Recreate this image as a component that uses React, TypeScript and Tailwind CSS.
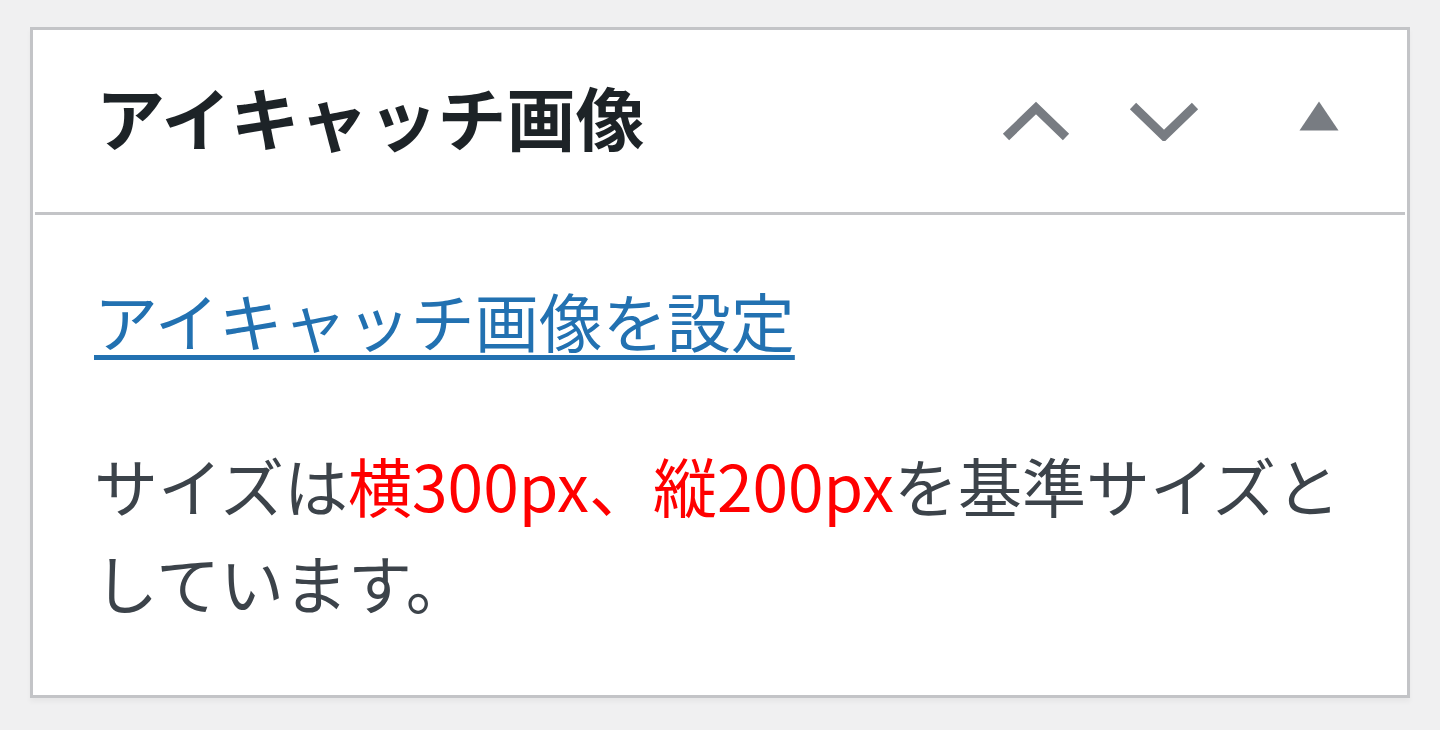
import React from "react";

export default function App() {
  return (
    <div className="w-[1440px] h-[730px] bg-[#f0f0f1] pt-[27px] pl-[30px] overflow-hidden" style={{ fontFamily: '"Noto Sans CJK JP", "Noto Sans", sans-serif' }}>
      <div className="w-[1380px] h-[671px] bg-white border-[3px] border-[#c3c4c7] shadow-[0_4px_5px_rgba(0,0,0,0.04)] flex flex-col">
        <div className="h-[185px] mx-[2px] border-b-[3px] border-[#c3c4c7] flex items-center justify-between pl-[61px] pr-[66px]">
          <h2 className="text-[69px] font-bold text-[#1d2327] leading-none mb-[9px]">アイキャッチ画像</h2>
          <div className="flex items-center">
            <svg width="70" height="40" viewBox="0 0 70 40" className="mr-[58px]">
              <path d="M5 36 L35 7 L65 36" fill="none" stroke="#787c82" strokeWidth="9" strokeLinejoin="miter" />
            </svg>
            <svg width="70" height="40" viewBox="0 0 70 40" className="mr-[100px]">
              <path d="M4 5 L35 35 L66 5" fill="none" stroke="#787c82" strokeWidth="9" strokeLinejoin="miter" />
            </svg>
            <svg width="40" height="30" viewBox="0 0 40 30" className="mb-[10px]">
              <path d="M0.5 29.5 L20 0.5 L39.5 29.5 Z" fill="#787c82" />
            </svg>
          </div>
        </div>
        <div className="pl-[61px] pr-[50px] pt-[66px]">
          <a href="#" className="text-[64px] leading-[1.2] text-[#2271b1] underline decoration-[5px] underline-offset-[8px] block w-fit">アイキャッチ画像を設定</a>
          <p className="text-[64px] leading-[97px] text-[#3c434a] mt-[78px] whitespace-nowrap">
            サイズは<span className="text-[#ff0000]">横300px、縦200px</span>を基準サイズと
            <br />
            しています。
          </p>
        </div>
      </div>
    </div>
  );
}
